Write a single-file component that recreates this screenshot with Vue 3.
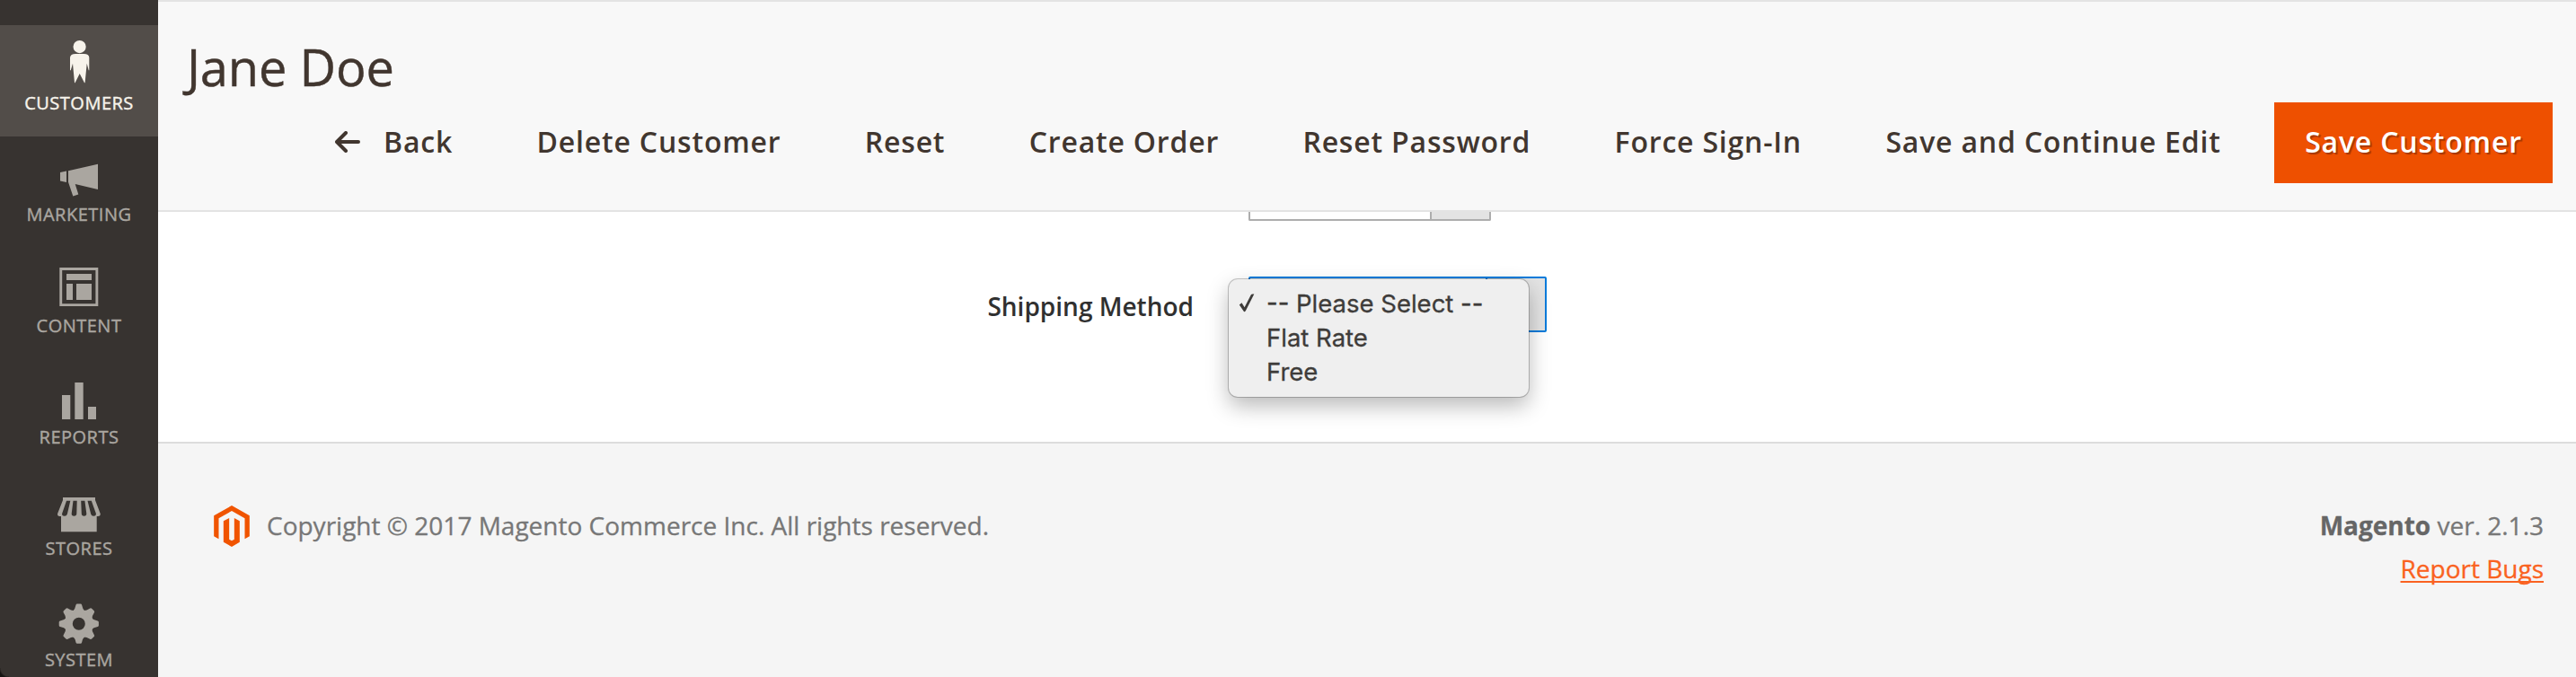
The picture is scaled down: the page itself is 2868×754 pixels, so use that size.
<script setup>
const navItems = [
  { id: 'customers', label: 'CUSTOMERS', active: true },
  { id: 'marketing', label: 'MARKETING' },
  { id: 'content', label: 'CONTENT' },
  { id: 'reports', label: 'REPORTS' },
  { id: 'stores', label: 'STORES' },
  { id: 'system', label: 'SYSTEM' }
]

const actions = [
  'Delete Customer',
  'Reset',
  'Create Order',
  'Reset Password',
  'Force Sign-In',
  'Save and Continue Edit'
]

const methods = ['-- Please Select --', 'Flat Rate', 'Free']
const gearAngles = [0, 45, 90, 135, 180, 225, 270, 315]
</script>

<template>
  <div class="admin">
    <nav class="sidebar">
      <a v-for="item in navItems" :key="item.id" class="nav-item" :class="{ active: item.active }">
        <svg class="nav-icon" viewBox="0 0 60 60" fill="currentColor">
          <template v-if="item.id === 'customers'">
            <circle cx="30.6" cy="14.1" r="7.1" />
            <path d="M26 22h9.500q5.500 0 5.800 4V40.300h-.6L38.700 32.700 36.600 54.300h-.6L30.700 44 25.600 54.300H25L23 32.700 20.800 40.300H20V26q.5-4 6-4z" />
          </template>
          <template v-else-if="item.id === 'marketing'">
            <path d="M9 30l7-1.400V41l-7-1.600z" />
            <path d="M18 28.300l33-7.600V49l-25.300-6 3.600 11.600-6 1.800L18 40.700z" />
          </template>
          <template v-else-if="item.id === 'content'">
            <path fill-rule="evenodd" d="M8.300 12h43v43h-43zM11.200 15v37.200h37.200V15z" />
            <path d="M16 19h28v7H16zM16 30h7v18h-7zM27 30h17v18H27z" />
          </template>
          <template v-else-if="item.id === 'reports'">
            <path d="M11 30h9.300v27H11zM25.300 16h9.400v41h-9.400zM40 43h9v14h-9z" />
          </template>
          <template v-else-if="item.id === 'stores'">
            <path d="M12 20h36v3l5.700 15q.4 3-2.700 3h-1.300v17.300H10V41H8.600q-3-.2-2.500-3L12 23z" />
            <g class="slots">
              <path d="M16 23.700h4.300L16.900 38.500q-.6 2.300-3.200 2.300-2.900 0-2.600-2.800z" />
              <path d="M23.500 23.700h4.200L27.300 38q-.1 2.800-2.900 2.800-2.800 0-2.700-2.800z" />
              <path d="M32.200 23.700h4.200L38.300 38q.1 2.800-2.700 2.800-2.700 0-2.800-2.800z" />
              <path d="M39.500 23.700h4.300L48.900 38q.2 2.800-2.600 2.800-2.500 0-3.100-2.300z" />
            </g>
          </template>
          <template v-else>
            <circle cx="29.8" cy="36.7" r="16" />
            <path
              v-for="angle in gearAngles"
              :key="angle"
              d="M22.500 23.500q3.400-3.200 4-7.700.3-1.200 1.500-1.200h3.600q1.200 0 1.500 1.200.6 4.500 4 7.700z"
              :transform="`rotate(${angle} 29.8 36.7)`"
            />
            <circle class="hole" cx="29.8" cy="36.7" r="7" />
          </template>
        </svg>
        <span class="nav-label">{{ item.label }}</span>
      </a>
    </nav>

    <div class="page">
      <header class="page-header">
        <h1>Jane Doe</h1>
        <div class="actions">
          <button class="action back">
            <svg viewBox="0 0 28 24" width="28" height="24">
              <path d="M12 2L2 12l10 10M2.500 12H26" />
            </svg>
            <span>Back</span>
          </button>
          <button v-for="action in actions" :key="action" class="action">{{ action }}</button>
          <button class="primary">Save Customer</button>
        </div>
      </header>

      <main class="form">
        <div class="field previous">
          <span></span>
          <div class="select"><span class="toggle"></span></div>
        </div>
        <div class="field shipping">
          <label>Shipping Method</label>
          <div class="select focused">
            <span class="toggle"></span>
            <ul class="menu">
              <li v-for="(method, i) in methods" :key="method">
                <svg v-if="i === 0" class="check" viewBox="0 0 18 22">
                  <path d="M.8 12.500L3.500 10.300 6.600 15.200 13.700 1.500Q14.300.5 15.500.5H17.300L8.200 18.500Q7.500 20.500 6.100 20.300z" />
                </svg>
                {{ method }}
              </li>
            </ul>
          </div>
        </div>
      </main>

      <footer class="footer">
        <div class="copyright">
          <svg class="logo" viewBox="0 0 119 138">
            <path d="M59.500 0L119 34v69l-16 9V43L59.500 18 16 43v69L0 103V34z" />
            <path d="M32 52l19-10v71l8.500 5 8.500-5V42l18 10v70l-26.500 16L32 122z" />
          </svg>
          <span>Copyright © 2017 Magento Commerce Inc. All rights reserved.</span>
        </div>
        <div class="version">
          <p><strong>Magento</strong> ver. 2.1.3</p>
          <a>Report Bugs</a>
        </div>
      </footer>
    </div>
  </div>
</template>

<style>
body {
  margin: 0;
  overflow: hidden;
}
</style>

<style scoped>
.admin {
  display: flex;
  height: 754px;
  overflow: hidden;
  background: #fff;
  font-family: "Open Sans", "Noto Sans", sans-serif;
}

.sidebar {
  position: relative;
  flex: none;
  box-sizing: border-box;
  width: 176px;
  padding-top: 28px;
  background: #373330;
  overflow: hidden;
}

.sidebar::after {
  content: "";
  position: absolute;
  left: 0;
  bottom: 0;
  width: 10px;
  height: 10px;
  background: radial-gradient(circle at 100% 0, transparent 9px, #151412 11px);
}

.nav-item {
  display: flex;
  flex-direction: column;
  align-items: center;
  box-sizing: border-box;
  height: 124px;
  padding-top: 10px;
  color: #aaa6a0;
}

.nav-item.active {
  background: #524d49;
  color: #f7f3eb;
}

.nav-icon {
  flex: none;
  width: 60px;
  height: 60px;
}

.slots,
.hole {
  fill: #373330;
}

.nav-label {
  margin-top: 3px;
  font-size: 20px;
  line-height: 27px;
  letter-spacing: 0.5px;
  -webkit-text-stroke: 0.4px currentColor;
}

.page {
  display: flex;
  flex: 1;
  flex-direction: column;
  min-width: 0;
}

.page-header {
  flex: none;
  box-sizing: border-box;
  height: 236px;
  padding: 34px 26px 0 32px;
  border-top: 2px solid #e3e3e3;
  border-bottom: 2px solid #e3e3e3;
  background: #f8f8f8;
}

h1 {
  margin: 0 0 2px;
  color: #41362f;
  font-size: 56px;
  font-weight: 400;
  line-height: 76px;
  letter-spacing: -0.2px;
  -webkit-text-stroke: 0.4px currentColor;
}

.actions {
  display: flex;
  justify-content: flex-end;
  height: 90px;
}

button {
  box-sizing: border-box;
  height: 90px;
  padding: 0 34px 4px;
  border: 0;
  background: none;
  color: #41362f;
  font-family: inherit;
  font-size: 32px;
  font-weight: 600;
  letter-spacing: 0.8px;
  white-space: nowrap;
}

.action {
  margin-right: 25.4px;
}

.back {
  display: flex;
  align-items: center;
  gap: 26px;
}

.back svg {
  margin-top: 2px;
  fill: none;
  stroke: #41362f;
  stroke-width: 4;
  stroke-linecap: round;
  stroke-linejoin: round;
}

.primary {
  width: 310px;
  background: #ee5000;
  color: #fff;
  text-shadow: 2px 2px 1px rgba(0, 0, 0, 0.3);
}

.form {
  flex: none;
  height: 256px;
}

.field {
  display: grid;
  grid-template-columns: 1153px max-content;
  column-gap: 61px;
}

.shipping {
  margin-top: 62px;
}

label {
  padding-top: 14px;
  color: #303030;
  font-size: 28px;
  font-weight: 600;
  line-height: 38px;
  text-align: right;
}

.select {
  position: relative;
  display: flex;
  justify-content: flex-end;
  box-sizing: border-box;
  width: 270px;
  height: 10px;
  border: 2px solid #adadad;
  border-top: 0;
  border-radius: 0 0 2px 2px;
  background: #fff;
}

.toggle {
  box-sizing: border-box;
  width: 66px;
  border-left: 2px solid #adadad;
  background: #e3e3e3;
}

.select.focused {
  width: 332px;
  height: 62px;
  border: 2px solid #007bdb;
  border-radius: 2px;
}

.focused .toggle {
  border-left-color: #007bdb;
}

.menu {
  position: absolute;
  top: 1px;
  left: -24px;
  box-sizing: border-box;
  width: 334px;
  height: 131px;
  margin: 0;
  padding: 8px 0 0 42px;
  border-radius: 10px;
  background: #efefef;
  box-shadow: 0 0 0 1px rgba(0, 0, 0, 0.22), 0 10px 24px rgba(0, 0, 0, 0.28);
  color: #3e3c3a;
  font-family: Inter, "Liberation Sans", sans-serif;
  font-size: 27.5px;
  line-height: 38px;
  list-style: none;
  -webkit-text-stroke: 0.3px currentColor;
}

.menu li {
  position: relative;
  height: 38px;
  white-space: nowrap;
}

.check {
  position: absolute;
  top: 8px;
  left: -31px;
  width: 18px;
  height: 22px;
  fill: #3e3c3a;
}

.footer {
  display: flex;
  flex: 1;
  justify-content: space-between;
  padding: 72px 36px 0 62px;
  border-top: 2px solid #dcdcdc;
  background: #f5f5f5;
  color: #777;
  font-size: 28px;
  line-height: 38px;
  -webkit-text-stroke: 0.3px currentColor;
}

.copyright {
  display: flex;
  align-items: flex-start;
  gap: 19px;
}

.logo {
  width: 40px;
  height: 46px;
  margin-top: -3px;
  fill: #f05400;
}

.version {
  text-align: right;
}

.version p {
  margin: 0 0 10px;
}

.version strong {
  color: #666;
  font-weight: 700;
}

.version a {
  color: #fa6220;
  text-decoration: underline;
  text-decoration-skip-ink: none;
  text-decoration-thickness: 2px;
  text-underline-offset: 3px;
}
</style>
